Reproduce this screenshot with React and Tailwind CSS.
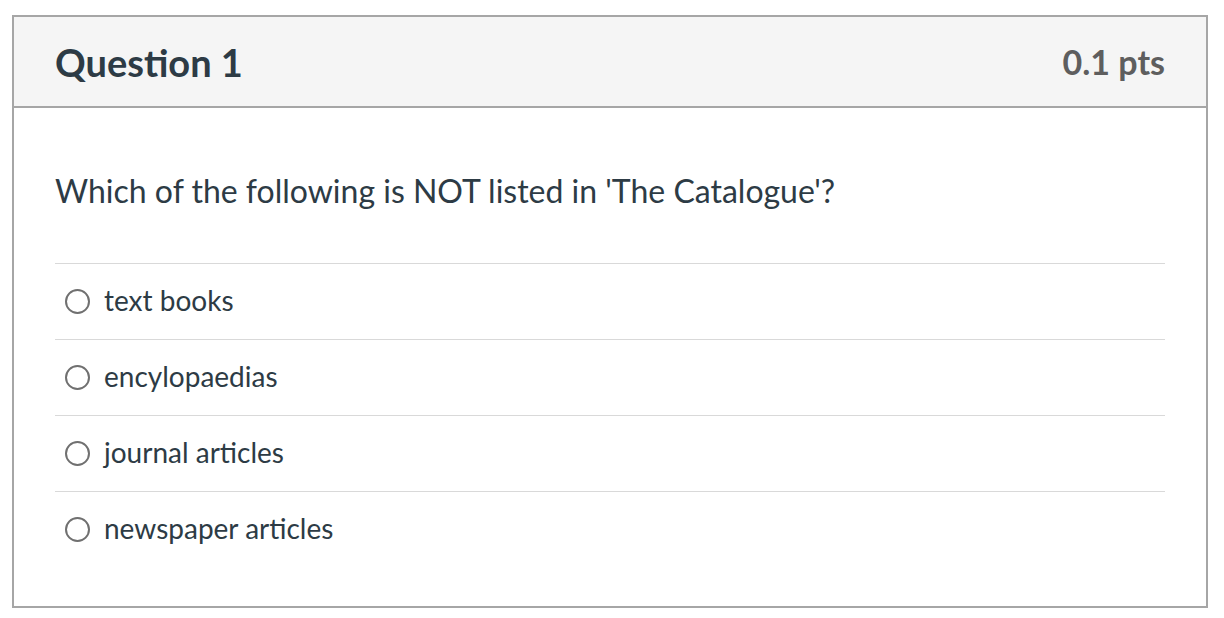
export default function App() {
  const answers = ["text books", "encylopaedias", "journal articles", "newspaper articles"];

  return (
    <div className="min-h-[618px] bg-white pl-[12px] pt-[15px]" style={{ fontFamily: "Lato, 'Noto Sans', sans-serif" }}>
      <div className="w-[1196px] h-[593px] border-2 border-[#a6a6a6] bg-white">
        <div className="flex h-[91px] items-center justify-between border-b-2 border-[#a6a6a6] bg-[#f5f5f5] px-[41px]">
          <h2 className="text-[38px] font-bold leading-none text-[#2d3b45]">Question 1</h2>
          <span className="text-[34px] font-bold leading-none text-[#5e5e5e]">0.1 pts</span>
        </div>
        <div className="px-[41px] pt-[62px]">
          <p className="text-[32px] leading-[42px] text-[#2d3b45]">Which of the following is NOT listed in 'The Catalogue'?</p>
          <div className="mt-[51px]">
            {answers.map((a) => (
              <label key={a} className="flex h-[76px] items-center border-t border-[#d9d9d9]">
                <span className="ml-[10px] block h-[25px] w-[25px] rounded-full border-2 border-[#707070] bg-white"></span>
                <span className="ml-[14px] -mt-[3px] text-[28px] text-[#2d3b45]">{a}</span>
              </label>
            ))}
          </div>
        </div>
      </div>
    </div>
  );
}
